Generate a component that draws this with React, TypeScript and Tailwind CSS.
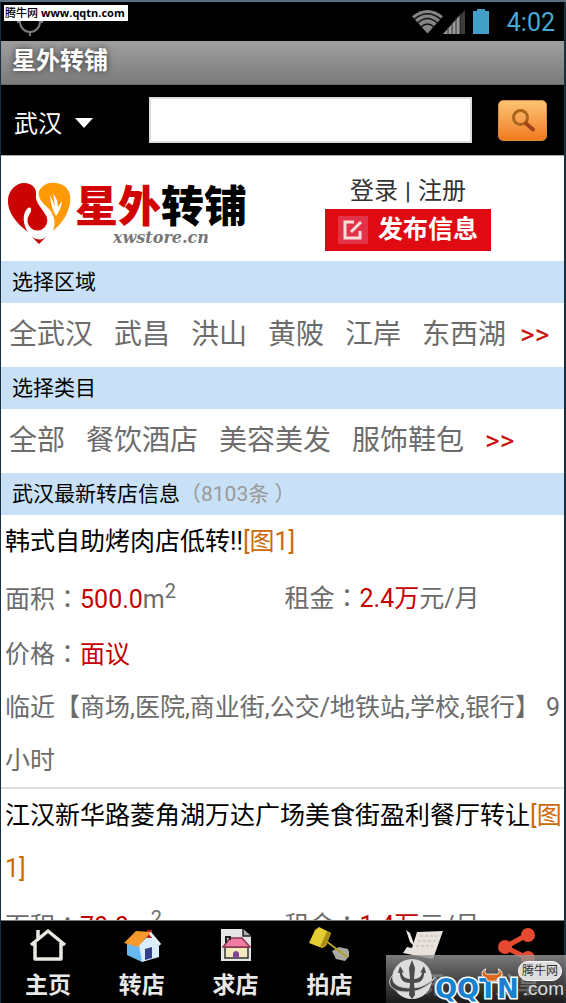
import { ReactNode } from "react";

type Listing = {
    title: string;
    photos: string;
    area: string;
    rent: string;
    price: string;
    nearby: string;
};

const App = () => {
    return (
        <div className="relative h-screen bg-[#173040] border-t-2 border-[#5a6f80] pl-px pr-[2px] overflow-hidden font-['Roboto','Noto_Sans_CJK_SC',sans-serif]">
            <div className="h-full flex flex-col bg-white">
                <StatusBar />

                <header>
                    <div className="h-11 px-[11px] pb-1 flex items-center bg-linear-to-b from-[#9f9f9f] to-[#7b7b7b] border-b border-[#6a6a6a]">
                        <h1 className="text-[24px] leading-[30px] font-bold text-white [text-shadow:0_0_6px_#333]">
                            星外转铺
                        </h1>
                    </div>
                    <SearchBar />
                </header>

                <main className="flex-1 min-h-0 overflow-hidden bg-white">
                    <Brand />

                    <SectionTitle>选择区域</SectionTitle>
                    <LinkRow
                        items={regions}
                        moreClass="-ml-[7px]"
                    />

                    <SectionTitle>选择类目</SectionTitle>
                    <LinkRow items={categories} />

                    <SectionTitle>
                        武汉最新转店信息
                        <span className="text-[#999]">（8103条 ）</span>
                    </SectionTitle>

                    {listings.map((item) => (
                        <ListingItem
                            key={item.title}
                            item={item}
                        />
                    ))}
                </main>

                <BottomNav />
            </div>

            <div className="absolute left-[4px] top-[3px] h-4 w-[124px] px-px flex items-center gap-[3px] bg-white text-black text-[11px] leading-4 font-bold font-['Open_Sans','Noto_Sans_CJK_SC',sans-serif] whitespace-nowrap">
                <span className="font-medium">腾牛网</span>
                <span>www.qqtn.com</span>
            </div>

            <Watermark />
        </div>
    );
};
export default App;

const StatusBar = () => (
    <div className="h-[39px] shrink-0 bg-black pl-4 pr-[9px] flex items-center justify-between">
        <svg
            className="w-[26px] h-8 mb-1"
            viewBox="0 0 26 32"
            fill="none"
            stroke="#7c7c7c"
            strokeWidth="2"
            aria-hidden="true"
        >
            <circle
                cx="13"
                cy="18"
                r="10"
            />
            <path d="M13 28v4M13 4v4M0 18h3M23 18h3" />
        </svg>
        <div className="flex items-center">
            <svg
                className="w-[31px] h-[25px]"
                viewBox="0 0 32 25"
                aria-hidden="true"
            >
                <path
                    d="M0 7Q16-6 32 7L16 25Z"
                    fill="#858585"
                />
                <path
                    d="M2.500 10Q16-1 29.500 10M6 14Q16 5 26 14M9.500 18Q16 12 22.500 18"
                    fill="none"
                    stroke="#111"
                    strokeWidth="1.500"
                />
            </svg>
            <svg
                className="w-[22px] h-[26px]"
                viewBox="0 0 22 26"
                aria-hidden="true"
            >
                <path
                    d="M0 25L17 6V25Z"
                    fill="#999"
                />
                <path
                    d="M17.500 6L22 1V25H17.500Z"
                    fill="#3c3c3c"
                />
                <path
                    d="M5 18v7M9 14v11M13 9v16M17 5v20"
                    stroke="#333"
                    strokeWidth="1"
                />
            </svg>
            <svg
                className="w-4 h-[25px] ml-2"
                viewBox="0 0 16 25"
                fill="#439fc8"
                aria-hidden="true"
            >
                <path d="M4 0h8v2h4v23H0V2h4z" />
            </svg>
            <span className="ml-[18px] pt-[2px] text-[25px] leading-8 text-[#45a9d4]">
                4:02
            </span>
        </div>
    </div>
);

const SearchBar = () => (
    <form className="h-[71px] bg-black border-b border-[#aaa] pl-[13px] pr-[17px] flex items-center">
        <div className="relative w-[135px] shrink-0">
            <select
                aria-label="城市"
                className="appearance-none bg-transparent w-[84px] h-10 pt-2 text-[24px] leading-[32px] text-white"
            >
                <option>武汉</option>
            </select>
            <svg
                className="absolute left-[61px] top-[18px] w-[18px] h-[10px] pointer-events-none"
                viewBox="0 0 18 10"
                fill="#fff"
                aria-hidden="true"
            >
                <path d="M0 0h18L9 10z" />
            </svg>
        </div>
        <input
            type="text"
            aria-label="搜索"
            className="flex-1 min-w-0 h-[46px] bg-white border-2 border-[#ddd] px-2 text-[24px]"
        />
        <button
            type="submit"
            aria-label="搜索"
            className="ml-[26px] w-[49px] h-[41px] rounded-[5px] bg-linear-to-b from-[#fbc471] to-[#f07a1a] border border-[#d98a3c] flex items-center justify-center"
        >
            <svg
                className="w-6 h-6"
                viewBox="0 0 24 24"
                fill="none"
                aria-hidden="true"
            >
                <circle
                    cx="9.500"
                    cy="9.500"
                    r="7"
                    stroke="#a8641a"
                    strokeWidth="3"
                />
                <path
                    d="M15 15.500l7 6"
                    stroke="#a3431b"
                    strokeWidth="4"
                    strokeLinecap="round"
                />
            </svg>
        </button>
    </form>
);

const Brand = () => (
    <div className="h-[105px] pl-[6px] pr-[73px] flex items-center justify-between">
        <a
            href="#"
            className="flex items-center gap-[3px]"
        >
            <svg
                className="w-[65px] h-[62px] mt-2"
                viewBox="0 0 65 62"
                aria-hidden="true"
            >
                <path
                    d="M17 1C25 1 30 6 29 13C28 20 34 25 38 32A10 10 0 1 1 22 33C26 28 24 23 20 27C15 32 16 43 21 50C9 41 0 30 1 17C2 8 9 1 17 1Z"
                    fill="#cc0303"
                />
                <path
                    d="M32 9C36 2 42 0 49 1C59 2 65 10 63 21C61 33 55 41 46 49C50 39 46 30 39 24C34 20 31 15 32 9Z"
                    fill="#ff9a05"
                />
                <path
                    d="M49 34Q44 26 43 13L48 24L46 12Q51 17 51 25L55 19Q54 28 49 34Z"
                    fill="#fff"
                />
                <path
                    d="M25 55Q33 60 39 55L32 62Z"
                    fill="#cc0303"
                />
            </svg>
            <span className="flex flex-col pt-3">
                <span className="font-['Noto_Sans_CJK_SC',sans-serif] text-[43px] leading-[42px] font-black text-black">
                    <span className="text-[#d10303]">星外</span>转铺
                </span>
                <span className="self-center pt-[3px] text-[16px] leading-[21px] font-bold italic text-[#777] font-['DejaVu_Serif',serif]">
                    xwstore.cn
                </span>
            </span>
        </a>
        <div className="w-[166px] pt-[6px]">
            <div className="flex justify-center gap-[7px] text-[24px] leading-[36px] text-[#333]">
                <a href="#">登录</a>
                <span>|</span>
                <a href="#">注册</a>
            </div>
            <button
                type="button"
                className="w-full h-[42px] bg-[#df0a12] px-[13px] flex items-center justify-between text-white text-[25px] leading-[36px] font-bold"
            >
                <span className="w-[30px] h-7 bg-[#e23348] flex items-center justify-center">
                    <svg
                        className="w-5 h-5"
                        viewBox="0 0 20 20"
                        fill="none"
                        stroke="#f7dcdc"
                        strokeWidth="3"
                        aria-hidden="true"
                    >
                        <path d="M11 2H2V18H17V11" />
                        <path d="M8 12L18 2" />
                    </svg>
                </span>
                发布信息
            </button>
        </div>
    </div>
);

const SectionTitle = ({ children }: { children: ReactNode }) => (
    <h2 className="h-[42px] px-[11px] text-[21px] leading-[42px] text-black bg-[#c8e1f6] whitespace-nowrap">
        {children}
    </h2>
);

const LinkRow = ({
    items,
    moreClass = "",
}: {
    items: string[];
    moreClass?: string;
}) => (
    <nav className="h-16 px-2 flex items-center gap-[21px] text-[28px] leading-[42px] text-[#6c6c6c] whitespace-nowrap">
        {items.map((item) => (
            <a
                key={item}
                href="#"
            >
                {item}
            </a>
        ))}
        <a
            href="#"
            className={`${moreClass} text-[#c11]`}
        >
            &gt;&gt;
        </a>
    </nav>
);

const Label = ({ children }: { children: ReactNode }) => (
    <span className="font-['Noto_Sans_CJK_SC',sans-serif]">
        {children}
        <span className="font-['Noto_Sans_CJK_TC',sans-serif]">：</span>
    </span>
);

const ListingItem = ({ item }: { item: Listing }) => (
    <article className="pl-[4px] border-b-2 border-[#ddd] text-[25px] leading-[53px] text-[#6c6c6c]">
        <h3 className="text-black break-all">
            {item.title}
            <span className="text-[#cc6a0a]">[{item.photos}]</span>
        </h3>
        <div className="h-[58px] grid grid-cols-2 items-center">
            <p className="self-end">
                <Label>面积</Label>
                <span className="text-[#c40000]">{item.area}</span>m
                <sup className="text-[20px]">2</sup>
            </p>
            <p>
                <Label>租金</Label>
                <span className="text-[#c40000]">{item.rent}</span>元/月
            </p>
        </div>
        <p>
            <Label>价格</Label>
            <span className="text-[#c40000]">{item.price}</span>
        </p>
        <p>{item.nearby}</p>
    </article>
);

const BottomNav = () => (
    <nav className="h-[83px] shrink-0 grid grid-cols-6 bg-black border-t border-[#777] text-[#e8e8e8]">
        {tabs.map((tab) => (
            <a
                key={tab.label}
                href="#"
                className="flex flex-col items-center pt-[6px] gap-[7px]"
            >
                <svg
                    className="w-10 h-9"
                    viewBox="0 0 40 36"
                    aria-hidden="true"
                >
                    {tab.icon}
                </svg>
                <span className="text-[23px] leading-[32px] font-bold">
                    {tab.label}
                </span>
            </a>
        ))}
    </nav>
);

const Watermark = () => (
    <div className="absolute right-0 bottom-0 w-[180px] h-12 bg-linear-to-b from-[#999]/80 to-[#222]/80">
        <svg
            className="absolute left-0 top-0 w-[54px] h-12"
            viewBox="0 0 54 48"
            aria-hidden="true"
        >
            <circle
                cx="26"
                cy="24"
                r="20"
                fill="#ddd"
            />
            <path
                d="M7 20C1 26 3 33 12 36C20 38 30 37 37 33C43 30 47 26 49 22C42 30 34 33 25 33C12 33 5 29 7 20Z"
                fill="#444"
                stroke="#ccc"
                strokeWidth="1"
            />
            <path
                d="M26 5L29 13L28 24C33 24 36 21 36 17L34 18L38 11L40 18L38 18C38 25 34 28 28 28L29 40L26 44L23 40L24 28C18 28 14 25 14 18L12 18L14 11L18 18L16 17C16 21 19 24 24 24L23 13Z"
                fill="#4a4a4a"
            />
        </svg>
        <span className="absolute left-[49px] bottom-0 text-[26px] leading-7 font-bold text-[#1583cf] font-['DejaVu_Sans',sans-serif] [-webkit-text-stroke:3px_#fff] [paint-order:stroke_fill]">
            QQTN
        </span>
        <span className="absolute right-[2px] bottom-0 text-[19px] leading-7 text-[#ddd] font-['Liberation_Sans',sans-serif]">
            .com
        </span>
        <svg
            className="absolute left-[94px] top-[13px] w-[24px] h-[14px]"
            viewBox="0 0 26 16"
            aria-hidden="true"
        >
            <path
                d="M6 1C0 3 0 10 6 11L8 15H18L20 11C26 10 26 3 20 1C23 5 20 8 16 7H10C6 8 3 5 6 1Z"
                fill="#d9681c"
                stroke="#fff"
                strokeWidth="1"
            />
        </svg>
        <span className="absolute right-[4px] top-[6px] w-11 h-5 rounded-full bg-[#ddd] border border-white text-center text-[12px] leading-[18px] text-[#333]">
            腾牛网
        </span>
    </div>
);

const tabs: Array<{ label: string; icon: ReactNode }> = [
    {
        label: "主页",
        icon: (
            <path
                d="M3 18L20 4L37 18M7 16V32H33V16M10 11V3"
                fill="none"
                stroke="#e9e9e4"
                strokeWidth="3.500"
                strokeLinejoin="round"
            />
        ),
    },
    {
        label: "转店",
        icon: (
            <>
                <path
                    d="M5 17L20 12L20 35L5 28Z"
                    fill="#68b8f0"
                />
                <path
                    d="M17 18L28 7L37 19V30L20 35Z"
                    fill="#d8eeff"
                />
                <path
                    d="M25 3h5v8h-5z"
                    fill="#b62020"
                />
                <path
                    d="M2 16L14 4L29 5L16 20Z"
                    fill="#f79a2c"
                />
                <path
                    d="M28 6L38 18"
                    stroke="#e9f5ff"
                    strokeWidth="3"
                />
                <path
                    d="M23 22l7-2v11l-7 2z"
                    fill="#35408c"
                />
            </>
        ),
    },
    {
        label: "求店",
        icon: (
            <>
                <path
                    d="M5 2h22l8 7v25H5z"
                    fill="#e5e5e5"
                />
                <path
                    d="M27 2v7h8"
                    fill="#aaa"
                    stroke="#222"
                    strokeWidth="1.500"
                />
                <path
                    d="M9 20h23v11H9z"
                    fill="#f5e8bd"
                    stroke="#333"
                    strokeWidth="1.500"
                />
                <path
                    d="M7 20L14 11H26L34 20Z"
                    fill="#f27da2"
                    stroke="#8c3450"
                    strokeWidth="1.500"
                />
                <path
                    d="M10 16v-6h4v3"
                    fill="none"
                    stroke="#222"
                    strokeWidth="2"
                />
                <path
                    d="M17 31v-5q3-4 6 0v5z"
                    fill="#7d4794"
                />
            </>
        ),
    },
    {
        label: "拍店",
        icon: (
            <>
                <path
                    d="M23 24l7-4 9 2 2 6-5 6-9-2z"
                    fill="#aaa79f"
                />
                <path
                    d="M17 14L38 30"
                    stroke="#b3a027"
                    strokeWidth="2"
                />
                <path
                    d="M6 3L10 0L22 6L17 19L13 21L0 16Z"
                    fill="#e4cd31"
                />
                <path
                    d="M18 4L22 6L17 19L11 20Z"
                    fill="#a98f16"
                />
            </>
        ),
    },
    {
        label: "资讯",
        icon: (
            <>
                <path
                    d="M14 5L40 4L30 32L0 26L4 20L9 21Z"
                    fill="#e8e2dc"
                />
                <path
                    d="M17 9h17M15 14h17M13 19h17"
                    stroke="#bcb4ad"
                    strokeWidth="1"
                    strokeDasharray="3 2"
                />
                <path
                    d="M3 3l4 3 5 14-5-5z"
                    fill="#f2ede8"
                />
            </>
        ),
    },
    {
        label: "分享",
        icon: (
            <g fill="#e5492f">
                <path
                    d="M30 8L8 20L30 31"
                    fill="none"
                    stroke="#e5492f"
                    strokeWidth="5"
                />
                <circle
                    cx="31"
                    cy="8"
                    r="7"
                />
                <circle
                    cx="8"
                    cy="20"
                    r="7"
                />
                <circle
                    cx="31"
                    cy="31"
                    r="7"
                />
            </g>
        ),
    },
];

const regions = ["全武汉", "武昌", "洪山", "黄陂", "江岸", "东西湖"];

const categories = ["全部", "餐饮酒店", "美容美发", "服饰鞋包"];

const listings: Listing[] = [
    {
        title: "韩式自助烤肉店低转!!",
        photos: "图1",
        area: "500.0",
        rent: "2.4万",
        price: "面议",
        nearby: "临近【商场,医院,商业街,公交/地铁站,学校,银行】 9小时",
    },
    {
        title: "江汉新华路菱角湖万达广场美食街盈利餐厅转让",
        photos: "图1",
        area: "70.0",
        rent: "1.4万",
        price: "面议",
        nearby: "临近【商场,医院,商业街,公交/地铁站,学校,银行】",
    },
];
